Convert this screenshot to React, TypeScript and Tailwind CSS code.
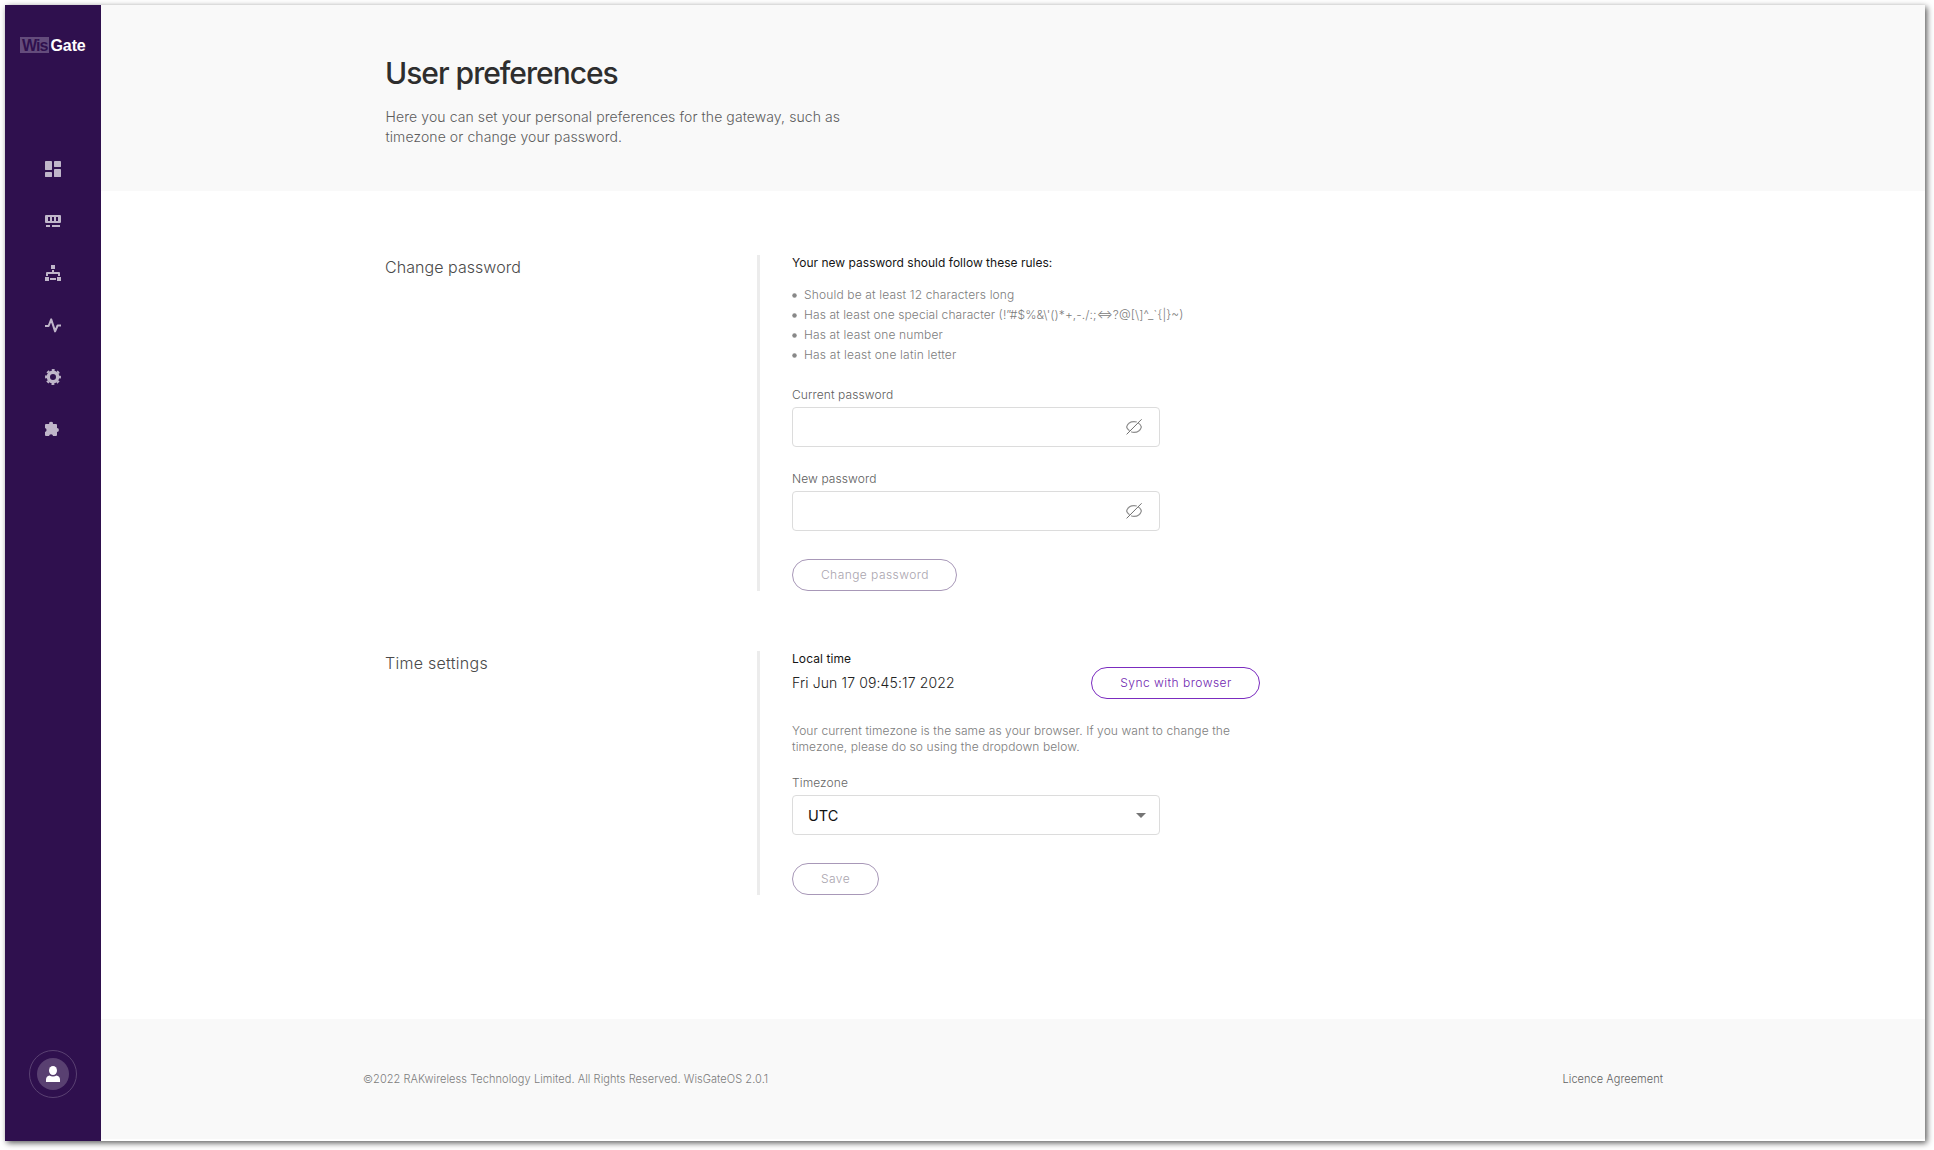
import React from "react";

const NAV_FILL = "#c0b6ca";

function DashboardIcon() {
  return (
    <svg width="16" height="16" viewBox="0 0 16 16" fill={NAV_FILL}>
      <rect x="0" y="0" width="7" height="9" rx="0.4" />
      <rect x="0" y="11" width="7" height="5" rx="0.4" />
      <rect x="9" y="0" width="7" height="6" rx="0.4" />
      <rect x="9" y="8" width="7" height="8" rx="0.4" />
    </svg>
  );
}

function GatewayIcon() {
  return (
    <svg width="16" height="16" viewBox="0 0 16 16" fill={NAV_FILL}>
      <path
        fillRule="evenodd"
        d="M1 2h14a1 1 0 0 1 1 1v6a1 1 0 0 1-1 1H1a1 1 0 0 1-1-1V3a1 1 0 0 1 1-1zM3 4v4h2V4zM7 4v4h2V4zM11 4v4h2V4z"
      />
      <rect x="1" y="12" width="4" height="2" />
      <rect x="7" y="12" width="8" height="2" />
    </svg>
  );
}

function NetworkIcon() {
  return (
    <svg width="16" height="16" viewBox="0 0 16 16" fill={NAV_FILL}>
      <rect x="6" y="0" width="4" height="4" />
      <path d="M7 5h2v2h5a1 1 0 0 1 1 1v3h-2V9H3v2H1V8a1 1 0 0 1 1-1h5z" />
      <rect x="0" y="12" width="4" height="4" />
      <rect x="12" y="12" width="4" height="4" />
      <rect x="5" y="13" width="6" height="2" />
    </svg>
  );
}

function PulseIcon() {
  return (
    <svg width="16" height="16" viewBox="0 0 16 16" fill="none" stroke={NAV_FILL} strokeWidth="2" strokeLinejoin="round">
      <path d="M0 9h3.600L6.200 2.400l3.900 12L12.600 8.500H16" />
    </svg>
  );
}

function GearIcon() {
  return (
    <svg width="16" height="16" viewBox="0 0 16 16" fill="none">
      <circle cx="8" cy="8" r="4.700" stroke={NAV_FILL} strokeWidth="3.400" />
      <circle cx="8" cy="8" r="7" stroke={NAV_FILL} strokeWidth="1.900" strokeDasharray="2.900 2.598" strokeDashoffset="1.450" />
    </svg>
  );
}

function PuzzleIcon() {
  return (
    <svg width="16" height="16" viewBox="0 0 16 16" fill={NAV_FILL}>
      <path d="M1 3h3.200a1.900 1.900 0 1 1 3.700 0H11a1 1 0 0 1 1 1v3.100a1.900 1.900 0 1 1 0 3.800V14a1 1 0 0 1-1 1H8.100a2.100 2.100 0 0 0-4.100 0H1a1 1 0 0 1-1-1v-3.100a2 2 0 0 0 0-3.900V4a1 1 0 0 1 1-1z" />
    </svg>
  );
}

function EyeOffIcon() {
  return (
    <svg width="16" height="16" viewBox="0 0 16 16" fill="none">
      <path
        d="M12.200 3.900c1.600 1 2.800 2.500 3.200 4.100-.9 3-3.900 5.400-7.400 5.400-1 0-2-.2-2.900-.6M3.500 11.800C2.100 10.800 1 9.500.6 8 1.500 5 4.500 2.600 8 2.600c1 0 1.900.2 2.800.5"
        stroke="#8f8f8f"
        strokeWidth="1.100"
      />
      <path d="M.6 15.400L15.600.3" stroke="#4a4a4a" strokeWidth="0.800" />
    </svg>
  );
}

function PasswordField({ label }: { label: string }) {
  return (
    <label className="block">
      <span className="block h-4 text-[12px] font-light leading-4 tracking-[0.1px] text-[#5c5c5c]">{label}</span>
      <span className="mt-1 flex h-10 w-[368px] items-center rounded border border-[#dcdcdc] bg-white pl-4 pr-[17px]">
        <input type="password" className="min-w-0 flex-1 bg-transparent outline-none" />
        <EyeOffIcon />
      </span>
    </label>
  );
}

interface SectionProps {
  title: string;
  className: string;
  titleClass: string;
  children: React.ReactNode;
}

function Section({ title, className, titleClass, children }: SectionProps) {
  return (
    <section className={`flex ${className}`}>
      <h2 className={`w-[372px] text-[16px] font-light leading-6 text-[#4a4a4a] ${titleClass}`}>{title}</h2>
      <div className="w-[503px] border-l-[3px] border-[#ececec] pl-8">{children}</div>
    </section>
  );
}

const RULES = [
  { text: "Should be at least 12 characters long", tracking: "tracking-[0.15px]" },
  { text: "Has at least one special character (!”#$%&\\'()*+,-./:;<=>?@[\\]^_`{|}~)", tracking: "tracking-[0.09px]" },
  { text: "Has at least one number", tracking: "tracking-[0.14px]" },
  { text: "Has at least one latin letter", tracking: "tracking-[0.2px]" },
];

const NAV = [DashboardIcon, GatewayIcon, NetworkIcon, PulseIcon, GearIcon, PuzzleIcon];

export default function App() {
  return (
    <div className="h-[1150px] w-[1934px] overflow-hidden bg-white pl-[5px] pt-[5px] font-[Inter,sans-serif]">
      <div className="flex h-[1136px] w-[1920px] bg-white shadow-[2px_2px_6px_rgba(0,0,0,0.65)]">
        <aside className="flex w-24 flex-col items-center bg-[#2f104e]">
          <div className="mt-8 flex h-4 items-center self-start pl-[15px] font-['Liberation_Sans',sans-serif] text-[16px] font-bold">
            <span className="h-4 w-[29px] bg-[#644c7c] pl-[2px] leading-[17px] tracking-[-0.9px] text-[#2f104e]">Wis</span>
            <span className="h-4 pl-[1.500px] leading-[18px] tracking-[-0.1px] text-white">Gate</span>
          </div>
          <nav className="mt-[108px] flex flex-col gap-9">
            {NAV.map((Icon, i) => (
              <a key={i} className="block size-4">
                <Icon />
              </a>
            ))}
          </nav>
          <div className="mb-[43px] mt-auto flex size-12 items-center justify-center rounded-full border border-[#5a4172]">
            <div className="flex size-8 items-center justify-center rounded-full bg-[#594071]">
              <svg width="14" height="16" viewBox="0 0 14 16" fill="#fff">
                <ellipse cx="7" cy="4.500" rx="4" ry="4.500" />
                <path d="M0 16v-2.600C0 11.200 1.500 9.900 3.500 9.500c1 .7 2.200 1 3.500 1s2.500-.3 3.500-1c2 .4 3.500 1.700 3.500 3.900V16z" />
              </svg>
            </div>
          </div>
        </aside>

        <main className="flex flex-1 flex-col pb-[2px]">
          <header className="h-[186px] bg-[#f9f9f9] pl-[284px] pt-12">
            <h1 className="text-[30px] font-[460] leading-10 tracking-[-1px] text-[#2e2e2e]">User preferences</h1>
            <p className="mt-[14px] pl-[0.500px] text-[14px] font-light leading-5 tracking-[0.09px] text-[#5c5c5c]">
              Here you can set your personal preferences for the gateway, such as
              <br />
              timezone or change your password.
            </p>
          </header>

          <div className="flex-1 pl-[284px] pt-16">
            <Section title="Change password" className="h-[336px]" titleClass="tracking-[0.05px]">
              <h3 className="h-4 text-[12px] font-[370] leading-4 tracking-[0.01px] text-[#151515]">Your new password should follow these rules:</h3>
              <ul className="mt-[14px] text-[12px] font-light leading-5 text-[#7c7c7c]">
                {RULES.map((rule) => (
                  <li key={rule.text} className="flex items-center gap-[7px] whitespace-nowrap">
                    <span className="size-[5px] scale-90 rounded-full bg-[#888]" />
                    <span className={`[font-feature-settings:'calt'] ${rule.tracking}`}>{rule.text}</span>
                  </li>
                ))}
              </ul>
              <div className="mt-[22px] flex flex-col gap-6">
                <PasswordField label="Current password" />
                <PasswordField label="New password" />
              </div>
              <button className="mt-7 h-8 w-[165px] rounded-full border border-[#a898b8] pl-px text-[12px] font-light tracking-[0.45px] text-[#a9a4ae]">
                Change password
              </button>
            </Section>

            <Section title="Time settings" className="mt-[60px] h-[244px]" titleClass="tracking-[0.27px]">
              <div className="flex w-[468px] justify-between">
                <div>
                  <h3 className="h-4 text-[12px] font-[370] leading-4 tracking-[0.08px] text-[#151515]">Local time</h3>
                  <p className="mt-[6px] text-[14px] font-light leading-5 tracking-[0.13px] text-[#222]">Fri Jun 17 09:45:17 2022</p>
                </div>
                <button className="mt-4 h-8 w-[169px] rounded-full border border-[#7b2cbf] pl-px text-[12px] font-light tracking-[0.48px] text-[#7026b0]">
                  Sync with browser
                </button>
              </div>
              <p className="mt-6 text-[12px] font-light leading-4 tracking-[0.09px] text-[#7c7c7c]">
                Your current timezone is the same as your browser. If you want to change the
                <br />
                timezone, please do so using the dropdown below.
              </p>
              <div className="mt-5 h-4 text-[12px] font-light leading-4 tracking-[0.1px] text-[#666]">Timezone</div>
              <div className="mt-1 flex h-10 w-[368px] items-center justify-between rounded border border-[#dcdcdc] pl-[15px] pr-[13px] text-[14.500px] font-[370] text-[#111]">
                <span className="pt-px">UTC</span>
                <svg width="10" height="5" viewBox="0 0 10 5" fill="#757575">
                  <path d="M0 0h10L5 5z" />
                </svg>
              </div>
              <button className="mt-7 h-8 w-[87px] rounded-full border border-[#a898b8] text-[12px] font-light tracking-[0.45px] text-[#a9a4ae]">
                Save
              </button>
            </Section>
          </div>

          <footer className="flex h-[120px] items-center justify-between bg-[#f9f9f9] pl-[262px] pr-[262px] text-[11px] font-light leading-4 tracking-[0.06px]">
            <span className="text-[#7c7c7c]">©2022 RAKwireless Technology Limited. All Rights Reserved. WisGateOS 2.0.1</span>
            <a className="tracking-[0.05px] text-[#626262]">Licence Agreement</a>
          </footer>
        </main>
      </div>
    </div>
  );
}
